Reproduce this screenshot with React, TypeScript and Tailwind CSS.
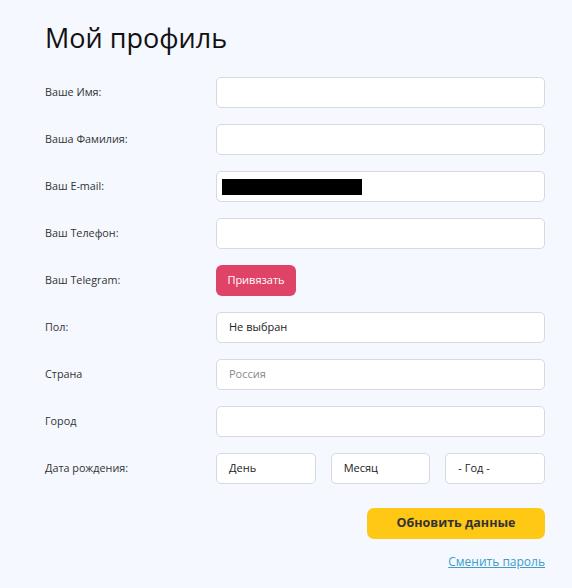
import React from "react";

const rows: Array<{ label: string; kind: "input" | "email" | "telegram" | "select" | "placeholder"; value?: string }> = [
  { label: "Ваше Имя:", kind: "input" },
  { label: "Ваша Фамилия:", kind: "input" },
  { label: "Ваш E-mail:", kind: "email" },
  { label: "Ваш Телефон:", kind: "input" },
  { label: "Ваш Telegram:", kind: "telegram" },
  { label: "Пол:", kind: "select", value: "Не выбран" },
  { label: "Страна", kind: "placeholder", value: "Россия" },
  { label: "Город", kind: "input" },
];

const box = "h-[31px] rounded-[5px] border border-[#d6d9de] bg-white";

export default function App() {
  return (
    <div className="min-h-[588px] w-[572px] bg-[#f5f8ff] pl-[45px] pr-[27px] pt-[20px] font-['Open_Sans',sans-serif] text-[#222]">
      <h1 className="text-[27px] leading-[36px] text-[#111]">Мой профиль</h1>

      <div className="mt-[21px] space-y-[16px]">
        {rows.map((row) => (
          <div key={row.label} className="flex items-center">
            <span className="w-[171px] shrink-0 text-[10.8px] text-[#333]">{row.label}</span>
            {row.kind === "telegram" ? (
              <button
                type="button"
                className="h-[31px] w-[80px] rounded-[6px] bg-[#e04368] text-[11px] text-white"
              >
                Привязать
              </button>
            ) : (
              <div className={`${box} flex flex-1 items-center px-[12px] text-[11px]`}>
                {row.kind === "email" ? <div className="-ml-[7px] h-[16px] w-[140px] bg-black" /> : null}
                {row.kind === "select" ? <span className="text-[#222]">{row.value}</span> : null}
                {row.kind === "placeholder" ? <span className="text-[#888]">{row.value}</span> : null}
              </div>
            )}
          </div>
        ))}

        <div className="flex items-center">
          <span className="w-[171px] shrink-0 text-[10.8px] text-[#333]">Дата рождения:</span>
          <div className="flex flex-1 gap-[15px]">
            {["День", "Месяц", "- Год -"].map((item) => (
              <div key={item} className={`${box} flex flex-1 items-center px-[12px] text-[11px] text-[#222]`}>
                {item}
              </div>
            ))}
          </div>
        </div>
      </div>

      <div className="mt-[24px] flex flex-col items-end">
        <button
          type="button"
          className="h-[31px] w-[178px] rounded-[7px] bg-[#fec814] text-[12.5px] font-bold text-[#333]"
        >
          Обновить данные
        </button>
        <a href="#" className="mt-[14px] text-[12px] text-[#3a9ec8] underline">
          Сменить пароль
        </a>
      </div>
    </div>
  );
}
